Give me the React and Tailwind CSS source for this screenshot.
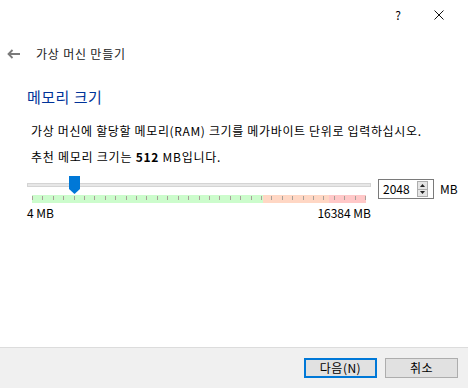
import React from 'react';

const TICKS = Array.from({ length: 33 });

const BackArrow = () => (
  <svg width="14" height="10" viewBox="0 0 14 10" className="block">
    <path d="M13 5H2M5.5 1L1.5 5l4 4" fill="none" stroke="#7a7a7a" strokeWidth="1.8" />
  </svg>
);

const CloseIcon = () => (
  <svg width="10" height="10" viewBox="0 0 10 10" className="block">
    <path d="M0.5 0.5l9 9M9.5 0.5l-9 9" stroke="#111" strokeWidth="1" />
  </svg>
);

const SpinButtons = () => (
  <div className="w-[11px] h-[16px] border border-[#adadad] bg-[#e5e5e5] flex flex-col">
    <div className="flex-1 flex items-center justify-center border-b border-[#adadad]">
      <svg width="5" height="3" viewBox="0 0 5 3"><path d="M2.5 0L5 3H0z" fill="#222" /></svg>
    </div>
    <div className="flex-1 flex items-center justify-center">
      <svg width="5" height="3" viewBox="0 0 5 3"><path d="M0 0h5L2.5 3z" fill="#222" /></svg>
    </div>
  </div>
);

const MemorySlider = () => (
  <div className="w-[344px]">
    <div className="relative pt-[7px]">
      <div className="h-[4px] bg-[#e7e7e7] border border-[#d4d4d4]" />
      <svg width="11" height="18" viewBox="0 0 11 18" className="absolute left-[42px] top-0">
        <path d="M0 0h11v13l-5.5 5L0 13z" fill="#0078d7" />
      </svg>
    </div>
    <div className="mx-[5px] mt-[8px] h-[8px] relative flex">
      <div className="w-[231px] bg-[#ccfccc]" />
      <div className="w-[66px] bg-[#ffd7c4]" />
      <div className="flex-1 bg-[#ffc8c8]" />
      <div className="absolute inset-0 flex justify-between">
        {TICKS.map((_, i) => (
          <div key={i} className="w-px h-[4px] mt-[1px] bg-[#a8a098]" />
        ))}
      </div>
    </div>
    <div className="flex justify-between mt-[2px] text-[12px] leading-[16px] text-black">
      <span>4 MB</span>
      <span>16384 MB</span>
    </div>
  </div>
);

const App = () => {
  return (
    <div className="w-[468px] h-[388px] bg-white flex flex-col font-['Noto_Sans_CJK_KR','Noto_Sans',sans-serif] text-black">
      <div className="h-[30px] flex items-center justify-end pr-[24px] gap-[33px]">
        <span className="text-[12px] leading-none">?</span>
        <CloseIcon />
      </div>

      <div className="h-[48px] flex items-center pl-[7px]">
        <BackArrow />
        <span className="ml-[15px] text-[12px] tracking-[0.8px] text-[#222]">가상 머신 만들기</span>
      </div>

      <div className="flex-1 pl-[27px]">
        <h1 className="mt-[9px] text-[15px] leading-[20px] tracking-[0.5px] text-[#003399]">메모리 크기</h1>
        <p className="mt-[16px] pl-[4px] text-[12px] leading-[16px] tracking-[0.65px] whitespace-nowrap">
          가상 머신에 할당할 메모리(RAM) 크기를 메가바이트 단위로 입력하십시오.
        </p>
        <p className="mt-[10px] pl-[4px] text-[12px] leading-[16px] tracking-[0.75px]">
          추천 메모리 크기는 <b>512</b> MB입니다.
        </p>

        <div className="mt-[11px] flex items-start">
          <MemorySlider />
          <div className="ml-[7px] mt-[3px] w-[56px] h-[20px] border border-[#7a7a7a] flex items-center justify-between pl-[4px] pr-[5px]">
            <span className="text-[12px] leading-none">2048</span>
            <SpinButtons />
          </div>
          <span className="ml-[6px] mt-[4px] text-[12px] leading-[18px]">MB</span>
        </div>
      </div>

      <div className="h-[41px] border-t border-[#dcdcdc] bg-[#f0f0f0] flex items-center justify-end gap-[8px] pr-[10px]">
        <button className="w-[73px] h-[20px] border-2 border-[#0078d7] bg-[#e1e1e1] text-[12px] leading-none tracking-[0.5px]">
          다음(N)
        </button>
        <button className="w-[73px] h-[20px] border border-[#adadad] bg-[#e1e1e1] text-[12px] leading-none tracking-[0.5px]">
          취소
        </button>
      </div>
    </div>
  );
};

export default App;
